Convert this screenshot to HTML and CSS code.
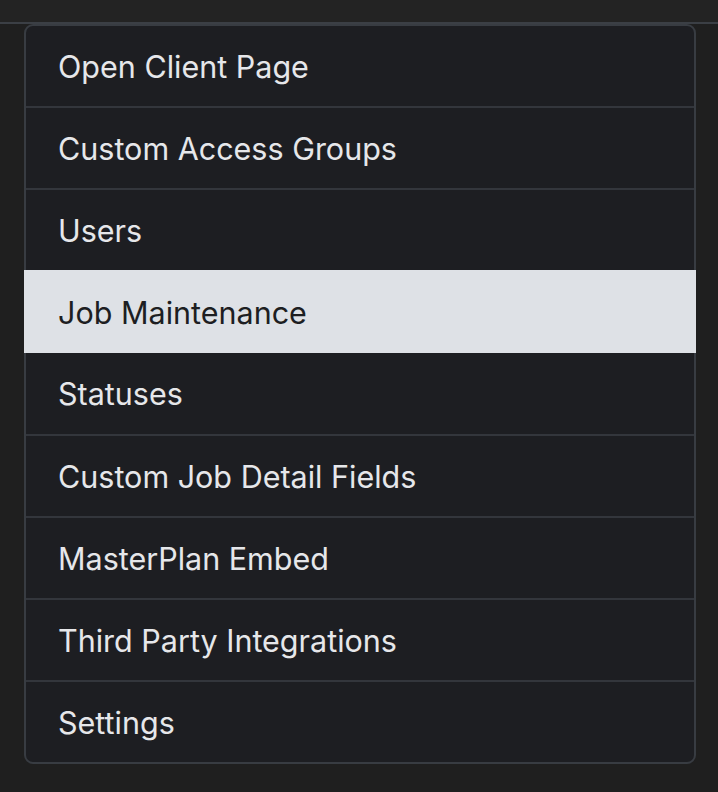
FILE: index.html
```html
<!DOCTYPE html>
<html>
<head>
<meta charset="utf-8">
<link rel="stylesheet" href="styles.css">
</head>
<body>
<div class="topbar"></div>
<div class="wrap">
  <ul class="menu">
    <li class="item">Open Client Page</li>
    <li class="item">Custom Access Groups</li>
    <li class="item">Users</li>
    <li class="item active">Job Maintenance</li>
    <li class="item">Statuses</li>
    <li class="item">Custom Job Detail Fields</li>
    <li class="item">MasterPlan Embed</li>
    <li class="item">Third Party Integrations</li>
    <li class="item">Settings</li>
  </ul>
</div>
</body>
</html>
```
FILE: styles.css
```css
html, body {
  margin: 0;
  padding: 0;
}
body {
  background: #1f1f1f;
  font-family: Inter, "Noto Sans", sans-serif;
  width: 718px;
  height: 792px;
  overflow: hidden;
}
.topbar {
  height: 22px;
  background: #232323;
  border-bottom: 2px solid #3b3f45;
}
.wrap {
  padding: 0 22px 0 24px;
}
.menu {
  list-style: none;
  margin: 0;
  padding: 0;
  background: #1d1e22;
  border: 2px solid #383c42;
  border-radius: 9px;
}
.item {
  height: 80px;
  display: flex;
  align-items: center;
  padding-left: 32px;
  font-size: 30.5px;
  color: #e6e7ea;
  border-top: 2px solid #33363c;
}
.item:first-child {
  border-top: none;
}
.item.active {
  background: #dee1e6;
  color: #1d1e22;
  border-top-color: #dee1e6;
  margin: 0 -2px;
  padding-left: 34px;
  height: 81px;
}
.item.active + .item {
  border-top: none;
  height: 81px;
}
```
